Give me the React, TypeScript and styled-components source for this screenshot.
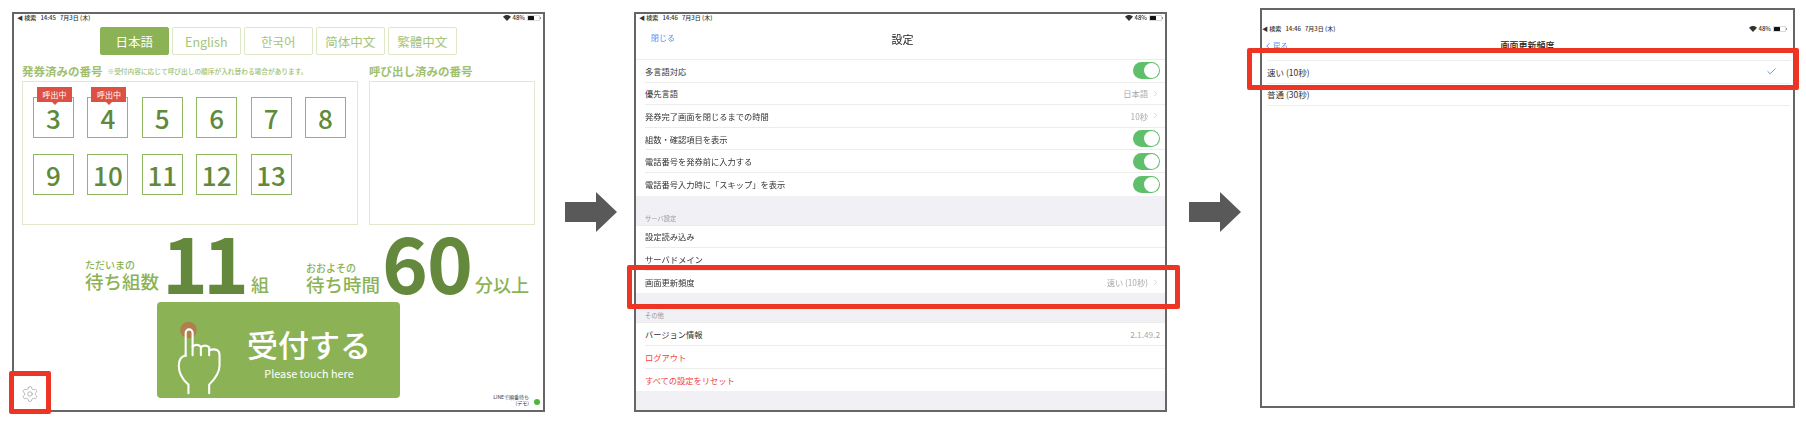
import React from 'react';
import styled, { createGlobalStyle } from 'styled-components';
import { ChevronRight, Settings, Check, ChevronLeft } from 'lucide-react';

const FONT = `'Noto Sans CJK JP', 'Noto Sans', sans-serif`;

const languages = ['日本語', 'English', '한국어', '简体中文', '繁體中文'];
const waiting = [3, 4, 5, 6, 7, 8, 9, 10, 11, 12, 13];
const calling = [3, 4];

type SettingRow = { label: string; value?: string; toggle?: boolean; chevron?: boolean; danger?: boolean };

const generalRows: SettingRow[] = [
  { label: '多言語対応', toggle: true },
  { label: '優先言語', value: '日本語', chevron: true },
  { label: '発券完了画面を閉じるまでの時間', value: '10秒', chevron: true },
  { label: '組数・確認項目を表示', toggle: true },
  { label: '電話番号を発券前に入力する', toggle: true },
  { label: '電話番号入力時に「スキップ」を表示', toggle: true },
];

const serverRows: SettingRow[] = [
  { label: '設定読み込み' },
  { label: 'サーバドメイン' },
  { label: '画面更新頻度', value: '速い (10秒)', chevron: true },
];

const otherRows: SettingRow[] = [
  { label: 'バージョン情報', value: '2.1.49.2' },
  { label: 'ログアウト', danger: true },
  { label: 'すべての設定をリセット', danger: true },
];

const StatusRow = ({ time }: { time: string }) => (
  <StatusBar>
    <span>◀ 検索&nbsp;&nbsp; {time}&nbsp;&nbsp; 7月3日 (木)</span>
    <StatusRight>
      <svg width="8" height="6" viewBox="0 0 16 12">
        <path d="M8 12 0 3.5C4.5-1 11.500-1 16 3.500Z" fill="#333" />
      </svg>
      <span>48%</span>
      <svg width="14" height="6" viewBox="0 0 28 12">
        <rect x="0.5" y="0.5" width="25" height="11" rx="3" fill="none" stroke="#999" />
        <rect x="2" y="2" width="12" height="8" rx="1" fill="#111" />
        <rect x="26" y="4" width="2" height="4" fill="#999" />
      </svg>
    </StatusRight>
  </StatusBar>
);

const SettingList = ({ rows }: { rows: SettingRow[] }) => (
  <ListGroup>
    {rows.map((row) => (
      <ListRow key={row.label}>
        <RowLabel $danger={row.danger}>{row.label}</RowLabel>
        {row.value && <RowValue>{row.value}</RowValue>}
        {row.chevron && <ChevronRight size={9} color="#b5b5b5" strokeWidth={1.5} />}
        {row.toggle && (
          <Toggle>
            <Knob />
          </Toggle>
        )}
      </ListRow>
    ))}
  </ListGroup>
);

const Arrow = ({ before, after }: { before: number; after: number }) => (
  <ArrowIcon $before={before} $after={after} width="52" height="40" viewBox="0 0 52 40">
    <path d="M0 10H31V0L52 20 31 40V30H0Z" fill="#595959" />
  </ArrowIcon>
);

const App = () => (
  <>
    <GlobalStyle />
    <Page>
      <Frame>
        <StatusRow time="14:45" />
        <Tabs>
          {languages.map((lang, i) => (
            <Tab key={lang} $active={i === 0}>
              {lang}
            </Tab>
          ))}
        </Tabs>
        <Columns>
          <div>
            <HeadingRow>
              <Heading>発券済みの番号</Heading>
              <Note>※受付内容に応じて呼び出しの順序が入れ替わる場合があります。</Note>
            </HeadingRow>
            <NumberBox>
              <TileGrid>
                {waiting.map((n) => (
                  <Tile key={n}>
                    {calling.includes(n) && <CallBadge>呼出中</CallBadge>}
                    {n}
                  </Tile>
                ))}
              </TileGrid>
            </NumberBox>
          </div>
          <div>
            <HeadingRow>
              <Heading>呼び出し済みの番号</Heading>
            </HeadingRow>
            <NumberBox />
          </div>
        </Columns>
        <Stats>
          <StatLabel $width={77} $drop={8}>
            <Small>ただいまの</Small>
            <Big>待ち組数</Big>
          </StatLabel>
          <StatNumber $width={89} $spacing={-5}>
            11
          </StatNumber>
          <Unit $width={55}>組</Unit>
          <StatLabel $width={76} $drop={5}>
            <Small>おおよその</Small>
            <Big>待ち時間</Big>
          </StatLabel>
          <StatNumber $width={93} $spacing={-1}>
            60
          </StatNumber>
          <Unit $width={56}>分以上</Unit>
        </Stats>
        <Footer>
          <GearCell>
            <Settings size={18} color="#8c8c8c" strokeWidth={0.8} />
          </GearCell>
          <TouchButton>
            <svg width="45" height="76" viewBox="135 100 130 220">
              <circle cx="168" cy="132" r="24" fill="#b07f4d" />
              <g fill="none" stroke="#fff" strokeWidth="6" strokeLinecap="round">
                <path d="M160 207V140a10 10 0 0 1 20 0V205" />
                <path d="M180 180q12-10 24 0V205" />
                <path d="M204 182q12-10 24 0V205" />
                <path d="M228 190q30-8 30 15V235q0 25-30 55V315" />
                <path d="M160 205q-20 5-20 30q0 30 28 55V315" />
              </g>
            </svg>
            <TouchText>
              <TouchTitle>受付する</TouchTitle>
              <TouchSub>Please touch here</TouchSub>
            </TouchText>
          </TouchButton>
          <LineCell>
            <LineText>
              LINEで順番待ち
              <br />
              (デモ)
            </LineText>
            <LineDot />
          </LineCell>
        </Footer>
        <Highlight $left={-5} $top={357} $width={42} $height={43} />
      </Frame>

      <Arrow before={20} after={17} />

      <Frame>
        <StatusRow time="14:46" />
        <NavBar>
          <NavLink>閉じる</NavLink>
          <NavTitle>設定</NavTitle>
        </NavBar>
        <SettingList rows={generalRows} />
        <SectionHead $height={29}>サーバ設定</SectionHead>
        <SettingList rows={serverRows} />
        <SectionHead $height={29}>その他</SectionHead>
        <SettingList rows={otherRows} />
        <GrayFill />
        <Highlight $left={-9} $top={251} $width={553} $height={44} />
      </Frame>

      <Arrow before={22} after={19} />

      <PlainFrame>
        <StatusRow time="14:46" />
        <NavBarSmall>
          <BackLink>
            <ChevronLeft size={10} color="#3b82f6" />
            戻る
          </BackLink>
          <SmallTitle>画面更新頻度</SmallTitle>
        </NavBarSmall>
        <OptionList>
          <OptionRow>
            <span>速い (10秒)</span>
            <Check size={11} color="#3b82f6" strokeWidth={1.8} />
          </OptionRow>
          <OptionRow>
            <span>普通 (30秒)</span>
          </OptionRow>
        </OptionList>
        <Highlight $left={-15} $top={38} $width={552} $height={42} />
      </PlainFrame>
    </Page>
  </>
);

export default App;

const GlobalStyle = createGlobalStyle`
  * {
    margin: 0;
    padding: 0;
    box-sizing: border-box;
  }
  body {
    font-family: ${FONT};
    background: #fff;
  }
`;

const Page = styled.div`
  width: 1806px;
  height: 432px;
  display: flex;
  align-items: flex-start;
  padding: 12px 0 0 12px;
  overflow: hidden;
  filter: blur(0.35px);
`;

const Frame = styled.div`
  position: relative;
  width: 533px;
  height: 400px;
  border: 2px solid #666;
  display: flex;
  flex-direction: column;
  flex-shrink: 0;
  background: #fff;
`;

const ArrowIcon = styled.svg<{ $before: number; $after: number }>`
  flex-shrink: 0;
  margin: 180px ${(p) => p.$after}px 0 ${(p) => p.$before}px;
`;

const Highlight = styled.div<{ $left: number; $top: number; $width: number; $height: number }>`
  position: absolute;
  left: ${(p) => p.$left}px;
  top: ${(p) => p.$top}px;
  width: ${(p) => p.$width}px;
  height: ${(p) => p.$height}px;
  border: 5px solid #ee3524;
  border-radius: 2px;
`;

const StatusBar = styled.div`
  height: 7px;
  padding: 0 2px 0 3px;
  display: flex;
  align-items: center;
  justify-content: space-between;
  font-size: 6px;
  font-weight: 500;
  line-height: 7px;
  color: #333;
  white-space: nowrap;
`;

const PlainFrame = styled(Frame)`
  width: 535px;
  margin-top: -4px;
  padding-top: 15px;

  ${StatusBar} {
    padding: 0 6px 0 0;
  }
`;

const StatusRight = styled.div`
  display: flex;
  align-items: center;
  gap: 2px;
`;

const Tabs = styled.div`
  display: flex;
  gap: 3.5px;
  padding-left: 86px;
  margin-top: 6px;
`;

const Tab = styled.div<{ $active?: boolean }>`
  width: 68.500px;
  height: 28px;
  display: flex;
  align-items: center;
  justify-content: center;
  border: 1px solid ${(p) => (p.$active ? '#8bb356' : '#dce8c8')};
  border-radius: 2px;
  background: ${(p) => (p.$active ? '#8bb356' : '#fff')};
  color: ${(p) => (p.$active ? '#fff' : '#a5c47a')};
  font-size: 12.500px;
`;

const Columns = styled.div`
  display: grid;
  grid-template-columns: 336px 166px;
  gap: 11px;
  padding-left: 8px;
  margin-top: 9px;
`;

const HeadingRow = styled.div`
  height: 14px;
  display: flex;
  align-items: center;
  white-space: nowrap;
`;

const Heading = styled.div`
  font-size: 11.500px;
  font-weight: 700;
  color: #a0c070;
`;

const Note = styled.div`
  margin-left: 5px;
  font-size: 6.700px;
  font-weight: 500;
  color: #a0c070;
`;

const NumberBox = styled.div`
  height: 144px;
  margin-top: 3px;
  border: 1px solid #e0e9cd;
`;

const TileGrid = styled.div`
  display: grid;
  grid-template-columns: repeat(6, 41px);
  grid-auto-rows: 41px;
  column-gap: 13.400px;
  row-gap: 16px;
  padding: 15px 0 0 10px;
`;

const Tile = styled.div`
  position: relative;
  display: flex;
  align-items: center;
  justify-content: center;
  border: 1px solid #8fb860;
  font-size: 26px;
  font-weight: 500;
  line-height: 1;
  color: #5f8a3c;
`;

const CallBadge = styled.div`
  position: absolute;
  left: 3px;
  top: -11px;
  width: 35px;
  height: 15px;
  display: flex;
  align-items: center;
  justify-content: center;
  background: #dd5144;
  color: #fff;
  font-size: 8px;
  font-weight: 400;

  &::after {
    content: '';
    position: absolute;
    left: 14.500px;
    bottom: -3px;
    border-left: 3px solid transparent;
    border-right: 3px solid transparent;
    border-top: 3px solid #dd5144;
  }
`;

const Stats = styled.div`
  height: 72px;
  margin-top: 3px;
  padding-left: 71px;
  display: flex;
  align-items: flex-end;
  color: #8bb356;
  white-space: nowrap;
`;

const StatLabel = styled.div<{ $width: number; $drop: number }>`
  width: ${(p) => p.$width}px;
  margin-bottom: ${(p) => p.$drop}px;
`;

const Small = styled.div`
  font-size: 10px;
  line-height: 12px;
  font-weight: 500;
`;

const Big = styled.div`
  font-size: 18.500px;
  line-height: 21px;
  font-weight: 500;
`;

const StatNumber = styled.div<{ $width: number; $spacing: number }>`
  width: ${(p) => p.$width}px;
  align-self: flex-start;
  font-size: 78px;
  line-height: 64px;
  height: 64px;
  font-weight: 700;
  color: #64893c;
  letter-spacing: ${(p) => p.$spacing}px;
`;

const Unit = styled.div<{ $width: number }>`
  width: ${(p) => p.$width}px;
  margin-bottom: 4px;
  font-size: 18px;
  line-height: 24px;
  font-weight: 500;
`;

const Footer = styled.div`
  display: grid;
  grid-template-columns: 143px 243px 1fr;
  height: 108px;
  margin-top: 2px;
`;

const GearCell = styled.div`
  align-self: end;
  padding: 0 0 7px 7px;
  line-height: 0;
`;

const TouchButton = styled.div`
  height: 96px;
  padding: 17px 0 0 20px;
  display: flex;
  align-items: flex-start;
  gap: 25px;
  background: #8bb356;
  border-radius: 4px;
  color: #fff;
`;

const TouchText = styled.div`
  margin-top: 5px;
  text-align: center;
`;

const TouchTitle = styled.div`
  font-size: 31px;
  line-height: 40px;
  font-weight: 500;
  white-space: nowrap;
`;

const TouchSub = styled.div`
  font-size: 10.800px;
  line-height: 14px;
  margin-top: 2px;
  white-space: nowrap;
`;

const LineCell = styled.div`
  align-self: end;
  display: flex;
  align-items: flex-end;
  justify-content: flex-end;
  gap: 5px;
  padding: 0 3px 5px 0;
`;

const LineText = styled.div`
  font-size: 5px;
  line-height: 5.500px;
  text-align: right;
  color: #333;
  white-space: nowrap;
`;

const LineDot = styled.div`
  width: 6px;
  height: 6px;
  border-radius: 50%;
  background: #4bb83a;
`;

const NavBar = styled.div`
  height: 38px;
  position: relative;
  display: flex;
  align-items: center;
  justify-content: center;
`;

const NavLink = styled.div`
  position: absolute;
  left: 15px;
  top: 10px;
  font-size: 8px;
  line-height: 14px;
  color: #4a90f0;
`;

const NavTitle = styled.div`
  font-size: 11px;
  margin: -3px 0 0 4px;
  color: #222;
`;

const ListGroup = styled.div`
  background: #fff;
  border-top: 1px solid #ececec;
  padding-left: 9px;
`;

const ListRow = styled.div`
  height: 22.600px;
  padding-right: 5px;
  display: flex;
  align-items: center;
  gap: 3px;
  font-size: 8.250px;
  border-bottom: 1px solid #ececec;

  ${ListGroup} > &:last-child {
    border-bottom: none;
  }
`;

const RowLabel = styled.span<{ $danger?: boolean }>`
  flex: 1;
  color: ${(p) => (p.$danger ? '#f0443c' : '#333')};
`;

const RowValue = styled.span`
  color: #aaa;
`;

const Toggle = styled.div`
  width: 27px;
  height: 17px;
  padding: 1px;
  display: flex;
  justify-content: flex-end;
  border-radius: 9px;
  background: #5fbf6b;
`;

const Knob = styled.div`
  width: 15px;
  height: 15px;
  border-radius: 50%;
  background: #fff;
`;

const SectionHead = styled.div<{ $height: number }>`
  height: ${(p) => p.$height}px;
  padding: 0 0 2px 9px;
  display: flex;
  align-items: flex-end;
  background: #f0f0f5;
  font-size: 6.300px;
  color: #9a9a9a;
`;

const GrayFill = styled.div`
  flex: 1;
  background: #f0f0f5;
`;

const NavBarSmall = styled.div`
  height: 21px;
  margin-top: 7px;
  position: relative;
  display: flex;
  justify-content: center;
`;

const BackLink = styled.div`
  position: absolute;
  left: 1px;
  top: 0;
  display: flex;
  align-items: center;
  font-size: 7.500px;
  line-height: 14px;
  color: #4a90f0;
`;

const SmallTitle = styled.div`
  font-size: 9px;
  line-height: 14px;
  font-weight: 500;
  color: #222;
`;

const OptionList = styled.div`
  margin: 0 3px 0 5px;
  border-top: 1px solid #eee;
`;

const OptionRow = styled.div`
  height: 22.500px;
  padding-right: 13px;
  display: flex;
  align-items: center;
  justify-content: space-between;
  border-bottom: 1px solid #eee;
  font-size: 8.500px;
  color: #333;
`;
